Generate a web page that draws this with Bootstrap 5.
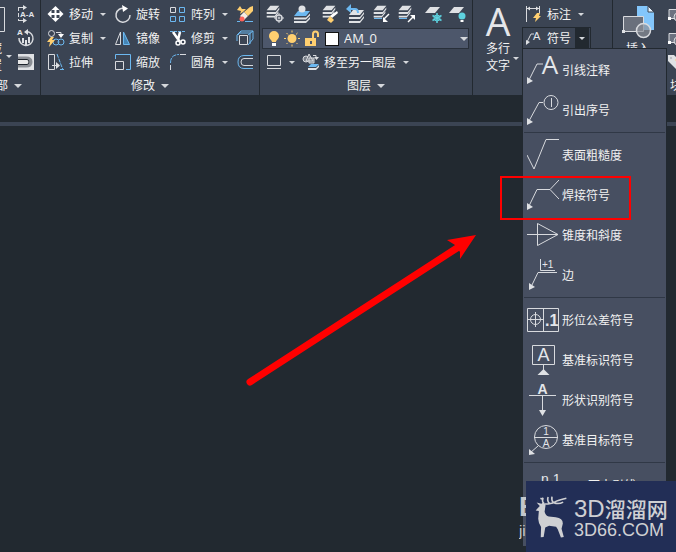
<!DOCTYPE html>
<html lang="zh-CN">
<head>
<meta charset="utf-8">
<meta name="viewport" content="width=device-width, initial-scale=1">
<title>CAD 符号菜单</title>
<link href="https://cdn.jsdelivr.net/npm/bootstrap@5.3.0/dist/css/bootstrap.min.css" rel="stylesheet">
<style>
:root{--panel:#3b4453;--dark:#222930;--menu:#474f61;--ink:#f2f2f2;--sky:#6cb8f0;--gold:#ffcf70}
body{background:var(--dark);color:var(--ink);font:12px/17px "Liberation Sans","Noto Sans CJK SC",sans-serif}
svg{fill:none;stroke:#d8dade;display:block;flex:none}
svg text{fill:#e4e6ea;stroke:none;font-family:"Liberation Sans",sans-serif}
.ribbon{height:95px;background:var(--panel)}
.panel{display:flex;flex-direction:column;flex:none;padding-top:2px;border-right:1px solid var(--dark)}
.panel-body{display:flex;height:72px}
.panel-title{display:flex;justify-content:center;align-items:center;gap:6px;height:24px;padding-top:3px;white-space:nowrap}
.tool{display:inline-flex;align-items:center;gap:4px;height:24px;padding:2px 0 0;border:0;background:none;color:inherit;white-space:nowrap}
.tool>svg,.symbol-menu svg{margin-top:-2px}
.drop{display:inline-flex;align-items:center;justify-content:center;width:20px;height:24px;padding:0;border:0;background:none}
.drop-narrow{width:16px}
.tri{border:solid transparent;border-width:3px 3px 0;border-top-color:#d5d8dc}
.tri-lg{border-width:4px 4px 0}
.tall{display:flex;flex-direction:column;align-items:center;justify-content:flex-end;width:50px;height:73px;padding:0;border:0;background:none;color:inherit}
.tall-label{display:flex;align-items:center;gap:3px;padding-left:9px}
.modify{display:grid;grid-template-columns:67px 55px 68px 20px;grid-auto-rows:24px;padding:0 4px}
.clipped{margin-left:-22px;width:24px}
.clipped-title{margin-left:-16px}
.layer-tools{display:grid;grid-template-columns:28px 28px 25px 26px 25px 28px 24px 20px}
.layer-box{display:flex;align-items:center;height:21px;margin:2px 3px 1px 2px;padding-left:4px;background:#4d576b;border:1px solid #29303a}
.layer-box select{appearance:none;flex:1;min-width:0;height:19px;padding:0;border:0;background:none;color:var(--ink);font:13px/17px "Open Sans",sans-serif}
.swatch{width:14px;height:14px;background:#fff;border:1px solid #111;margin:0 5px 0 4px}
.annotate{padding-right:21px}
.symbol{height:22px;margin:1px 0 0 -1px;border:1px solid var(--dark)}
.symbol .tool,.symbol .drop{height:20px}
.symbol .tool{width:52px}
.symbol .drop{width:14px;background:var(--dark)}
.symbol-menu{--bs-dropdown-min-width:145px;--bs-dropdown-bg:var(--menu);--bs-dropdown-font-size:12px;top:100%;left:-1px;width:145px;padding:1px 0 41px;border:1px solid var(--dark);border-radius:0}
.symbol-menu .dropdown-item{display:flex;align-items:center;gap:3px;height:40px;padding:2px 0 0 4px;color:var(--ink);line-height:17px}
.symbol-menu .dropdown-divider{margin:2px 1px;border-color:#303846;opacity:1}
.insert-title{padding-left:57px}
.tabs{height:27px}
.strip{height:4px;background:var(--panel)}
.solid{fill:#dfe1e4;stroke:none}
.blue{stroke:var(--sky)}
.yellow{fill:var(--gold);stroke:none}
.letter{font-family:"Open Sans",sans-serif}
.frame{left:500px;top:176px;width:131px;height:44px;border:2px solid #f00;z-index:1100;pointer-events:none}
.pointer{left:240px;top:230px;z-index:1}
.brand{right:0;bottom:0;width:150px;height:71px;background:#222e56;color:#cfd0d3;z-index:1200;gap:7px;padding:0 8px 0 9px}
.brand svg{stroke:#cfd0d3}
.brand-top{font-size:24px;line-height:26px;white-space:nowrap}
.brand-top b{font-size:21px;font-weight:500;font-family:"Noto Sans CJK SC",sans-serif}
.brand-sub{font-size:18px;line-height:17px}
.under{right:147px;bottom:11px;width:10px;z-index:1150;color:#c4c7cb;line-height:20px}
.under b{font-size:27px;line-height:28px}
.under span{font-size:15px}
</style>
<script src="https://cdn.jsdelivr.net/npm/bootstrap@5.3.0/dist/js/bootstrap.bundle.min.js"></script>
</head>
<body class="min-vh-100 overflow-hidden position-relative">
<svg width="0" height="0" class="position-absolute" aria-hidden="true">
  <symbol id="stack" viewBox="0 0 20 20"><g fill="#dfe1e4" stroke="none"><path d="M7 2h10l-4 5H3z"/><path d="M3 9h10l4-5v2l-4 5H3zM3 13h9l4-5v2l-4 5H3z"/></g></symbol>
  <symbol id="block" viewBox="0 0 20 20"><path d="M2 5.500h14v9H2zM2 14.500h14" fill="#6b7280" stroke="#d8dade"/><circle cx="11" cy="13" r="4" fill="#777d88" stroke="#d8dade"/><path d="M1 13h3v3H1z" fill="#fff" stroke="none"/></symbol>
</svg>

<header class="ribbon d-flex">
  <section class="panel overflow-hidden">
    <div class="panel-body">
      <button class="tall clipped" type="button"><svg class="overflow-visible mb-2" width="24" height="26"><path d="M4 .5h22.500v24H4"/></svg><span>隐藏<br>设置</span></button>
      <span class="d-flex align-items-end pb-3"><i class="tri ms-1"></i></span>
      <div class="d-flex flex-column ps-1 pe-1">
        <button class="tool" type="button" aria-label="截面"><svg width="20" height="20"><path d="M2.500 3v13" stroke-dasharray="4 2"/><path d="M2 3.500h6M2 16.500h6"/><path class="solid" d="M7 1l4 2.500L7 6zM7 14l4 2.500L7 19z"/><text x="4" y="13" font-size="8" font-weight="bold">A-A</text></svg></button>
        <button class="tool" type="button" aria-label="旋转视图"><svg width="20" height="20"><path d="M3 10a7 7 0 1 0 8-6.500" stroke-width="1.500"/><path class="solid" d="M12 1v6L8 4zM6 10h2v5H6zM9 12h2v5H9zM12 9h2v6h-2z"/><text x="1" y="7" font-size="8" font-weight="bold">A</text></svg></button>
        <button class="tool" type="button" aria-label="轮廓"><svg width="20" height="20"><path class="solid" d="M2 2h16v16H2z"/><path d="M2 6h8q5 0 5 4t-5 4H2" stroke="#8a8e94" stroke-width="3"/><path d="M2 7.500h9q2 0 2 2.500t-2 2.500H2" stroke="#1d232b" fill="#e8e8e8"/></svg></button>
      </div>
    </div>
    <div class="panel-title justify-content-start"><span class="clipped-title">局部</span><i class="tri tri-lg"></i></div>
  </section>

  <section class="panel">
    <div class="panel-body modify">
      <div class="d-flex"><button class="tool" type="button"><svg width="20" height="20"><path d="M10.500 4v12M4 10h13" stroke="#fff" stroke-width="2"/><path fill="#fff" stroke="none" d="M10.500 2l4 4h-8zM10.500 18l4-4h-8zM2.500 10l4-4v8zM18.500 10l-4-4v8z"/></svg>移动</button><button class="drop" type="button" aria-label="移动选项"><i class="tri"></i></button></div>
      <button class="tool" type="button"><svg width="20" height="20"><path d="M13 4.500A7 7 0 1 0 18 11" stroke-width="1.500"/><path d="M10 1l6 3.500L11 8z" fill="#fff" stroke="none"/></svg>旋转</button>
      <div class="d-flex"><button class="tool" type="button"><svg width="20" height="20"><path d="M3.500 3.500h5v5h-5z"/><path class="blue" d="M12.500 3.500h5v5h-5zM3.500 12.500h5v5h-5zM12.500 12.500h5v5h-5z"/></svg>阵列</button><button class="drop" type="button" aria-label="阵列选项"><i class="tri"></i></button></div>
      <button class="tool" type="button" aria-label="删除"><svg width="20" height="20"><path class="yellow" d="M15 3l3-1v5l-5 5-4-4zM5 2l2 3 4 0-3 3-3 2 1-3-4-1z"/><path d="M9 8l4 4-4 4-4-4z" fill="#f4ece4" stroke="none"/><circle cx="7" cy="15" r="2.500" fill="#ff6259" stroke="none"/><path class="blue" d="M2 17.500h3M10 17.500h8"/></svg></button>

      <div class="d-flex"><button class="tool" type="button"><svg width="20" height="20"><circle cx="6.500" cy="5.500" r="3"/><circle class="blue" cx="11" cy="14" r="3"/><circle class="blue" cx="16" cy="14" r="3"/><path d="M11 4.500h5V7"/><path d="M13 6h6l-3 4z" fill="#fff" stroke="none"/><path class="yellow" d="M6 9h3l-2 3h3l-6 7 1-5H2z"/></svg>复制</button><button class="drop" type="button" aria-label="复制选项"><i class="tri"></i></button></div>
      <button class="tool" type="button"><svg width="20" height="20"><path d="M3.500 16.500h5V4z"/><path class="blue" d="M11.500 4v12.500h6z" fill="#4585b5"/></svg>镜像</button>
      <div class="d-flex"><button class="tool" type="button"><svg width="20" height="20"><path class="blue" d="M3 3.500h16" stroke-dasharray="3 1"/><path d="M6 4l7 10M13 4l-2 8" stroke="#fff" stroke-width="2.500"/><circle cx="11" cy="15" r="2" stroke="#fff" stroke-width="1.500"/><circle cx="16" cy="14" r="2" stroke="#fff" stroke-width="1.500"/></svg>修剪</button><button class="drop" type="button" aria-label="修剪选项"><i class="tri"></i></button></div>
      <button class="tool" type="button" aria-label="三维"><svg width="20" height="20"><path class="blue" d="M2 13V7l4-4h12v8l-5 6M6 3l-3 4M13 7l5-4M15 6v10M5 5h11"/><path d="M4.500 7.500h8v9h-8z"/></svg></button>

      <button class="tool" type="button"><svg width="20" height="20"><path d="M3.500 2.500h6v15h-6zM7 13.500h5"/><path class="solid" d="M11 10l4 3.500-4 3.500z"/><path class="blue" d="M12 2l6 16" stroke-dasharray="4 1"/><path class="blue" d="M15 17.500h4"/></svg>拉伸</button>
      <button class="tool" type="button"><svg width="20" height="20"><path d="M3.500 9.500h8v8h-8z"/><path class="blue" d="M3.500 7V2.500h15v15H14"/></svg>缩放</button>
      <div class="d-flex"><button class="tool" type="button"><svg width="20" height="20"><path class="blue" d="M3.500 11Q3.500 2.500 12 2.500" stroke-dasharray="5 1"/><path d="M13 2.500h6M3.500 13v5"/></svg>圆角</button><button class="drop" type="button" aria-label="圆角选项"><i class="tri"></i></button></div>
      <button class="tool" type="button" aria-label="偏移"><svg width="20" height="20"><path class="blue" d="M18 3.500H9q-6 0-6 6.500t6 6.500h9"/><path d="M18 6.500H9q-3 0-3 3.500t3 3.500h9"/></svg></button>
    </div>
    <div class="panel-title">修改<i class="tri tri-lg"></i></div>
  </section>

  <section class="panel">
    <div class="panel-body flex-column">
      <div class="layer-tools ps-1 pe-1">
        <button class="tool" type="button" aria-label="图层特性"><svg width="20" height="20"><use href="#stack" width="18" height="18"/><circle cx="15" cy="14" r="3" fill="#3b4453" stroke-width="1.500"/><path d="M15 9v10M10 14h10" stroke-dasharray="2 6"/><circle cx="15" cy="14" r="1"/></svg></button>
        <button class="tool" type="button" aria-label="置为当前"><svg width="20" height="20"><path d="M6 7h12l-4 5H2z" fill="#6cb8f0" stroke="none"/><path class="solid" d="M2 13.500h12l4-4v2l-4 4H2zM2 17h12l4-4v2l-4 4H2z"/><circle class="solid" cx="10" cy="5" r="3.500"/></svg></button>
        <button class="tool" type="button" aria-label="匹配图层"><svg width="20" height="20"><use href="#stack" width="18" height="18"/><path d="M17 7l1 2-6 5-2-2z" fill="#fff" stroke="none"/><path class="yellow" d="M10 12l4 4-3 3-4-3z"/></svg></button>
        <button class="tool" type="button" aria-label="上一个"><svg width="20" height="20"><path class="solid" d="M8 6h11l-4 5H4zM4 13h11l4-5v2l-4 5H4zM4 17h11l4-5v2l-4 5H4z"/><path class="blue" d="M4 5h6q3 0 3 4" stroke-width="2"/><path d="M6 0v9L1 5z" fill="#6cb8f0" stroke="none"/></svg></button>
        <button class="tool" type="button" aria-label="隔离"><svg width="20" height="20"><use href="#stack" width="18" height="18"/><path class="blue" d="M3 14.500h8"/><path d="M18 10l-5 5" stroke="#fff" stroke-width="1.500"/><path d="M12 13v5h5z" fill="#fff" stroke="none"/></svg></button>
        <button class="tool" type="button" aria-label="取消隔离"><svg width="20" height="20"><use href="#stack" width="18" height="18"/><path class="blue" d="M3 14.500h8"/><path d="M12 18l5-5" stroke="#fff" stroke-width="1.500"/><path d="M14 11h5v5z" fill="#fff" stroke="none"/></svg></button>
        <button class="tool" type="button" aria-label="冻结"><svg width="20" height="20"><path class="solid" d="M6 3h10l-5 6H1z"/><path d="M13 9v10M8.500 11.500l9 5M8.500 16.500l9-5" stroke="#5ed2df" stroke-width="1.500"/><circle cx="13" cy="14" r="3" stroke="#5ed2df"/></svg></button>
        <button class="tool" type="button" aria-label="关闭"><svg width="20" height="20"><path class="solid" d="M6 3h10l-5 6H1z"/><circle cx="14" cy="12" r="3.500" fill="#5ed2df" stroke="none"/><path d="M12.500 16h3v2h-3z" fill="#fff" stroke="none"/></svg></button>
      </div>
      <div class="layer-box">
        <svg width="54" height="20"><path class="yellow" d="M7 2a5 5 0 0 0-5 5c0 3 3 4 3 6h4c0-2 3-3 3-6a5 5 0 0 0-5-5z"/><path d="M5 14h4v3H5z" fill="#fff" stroke="none"/><circle class="yellow" cx="25" cy="9.500" r="4.500"/><path d="M25 1.500v16M17 9.500h16M19.500 4l11 11M30.500 4l-11 11" stroke="#ffcf70" stroke-dasharray="2 12"/><path class="yellow" d="M38 9h11v8H38z"/><path d="M46 9V5q0-2.500 2.500-2.500T51 5v3" stroke="#ffcf70" stroke-width="2"/><path d="M43 12h2v3h-2z" fill="#4d576b" stroke="none"/></svg>
        <span class="swatch"></span>
        <select aria-label="当前图层"><option>AM_0</option></select><i class="tri tri-lg"></i>
      </div>
      <div class="d-flex ps-1"><button class="tool" type="button" aria-label="图层状态"><svg width="20" height="20"><path d="M3.500 3.500h13v10h-13zM3 16.500h14"/></svg></button><button class="drop drop-narrow" type="button" aria-label="状态选项"><i class="tri"></i></button><button class="tool" type="button"><svg width="20" height="20"><circle cx="6" cy="7" r="3" fill="#7b818b"/><path d="M9 2l4 7H6zM9 6h5v5H9z" fill="#7b818b"/><path d="M13 3.500h3V6"/><path class="solid" d="M14 5h5l-2.500 3z"/><path d="M11 12h8l-3 3H8z" fill="#6cb8f0" stroke="none"/><path class="solid" d="M8 16h8l3-3v2l-3 3H8z"/></svg>移至另一图层</button><button class="drop" type="button" aria-label="移动图层选项"><i class="tri"></i></button></div>
    </div>
    <div class="panel-title">图层<i class="tri tri-lg"></i></div>
  </section>

  <section class="panel">
    <div class="panel-body">
      <button class="tall" type="button"><svg width="30" height="38"><text class="letter" x="15" y="33" font-size="39" text-anchor="middle">A</text></svg><span class="tall-label"><span>多行<br>文字</span><i class="tri"></i></span></button>
      <div class="d-flex flex-column annotate">
        <div class="d-flex"><button class="tool" type="button"><svg width="20" height="20"><path d="M3.500 2v16M16.500 2v7M4 4.500h13"/><path class="solid" d="M4 4.500l3-2v4zM16 4.500l-3-2v4z"/><path class="yellow" d="M14 9h3l-1 3h2l-6 6 1-4h-3z"/></svg>标注</button><button class="drop" type="button" aria-label="标注选项"><i class="tri"></i></button></div>
        <div class="dropdown symbol d-flex">
          <button class="tool" type="button"><svg width="20" height="20"><path d="M4 14l4-8h3"/><path class="solid" d="M3 12v5l4-3z"/><text x="10" y="12" font-size="11">A</text></svg>符号</button>
          <button class="drop" type="button" aria-label="符号选项" aria-expanded="true" data-bs-toggle="dropdown"><i class="tri"></i></button>
          <div class="dropdown-menu symbol-menu show">
            <a class="dropdown-item" href="#"><svg width="32" height="36"><path d="M2 28l8-16h6"/><path class="solid" d="M0 25v7l6-3z"/><text class="letter" x="23" y="22" font-size="26" text-anchor="middle">A</text></svg>引线注释</a>
            <a class="dropdown-item" href="#"><svg width="32" height="36"><path d="M2 29l10-18.500h4M24.500 6v9"/><circle cx="24" cy="10.500" r="7"/><path class="solid" d="M0 26v7l6-3z"/></svg>引出序号</a>
            <hr class="dropdown-divider">
            <a class="dropdown-item" href="#"><svg width="32" height="36"><path d="M0 18l7 14L19 2.500h13"/></svg>表面粗糙度</a>
            <a class="dropdown-item" href="#"><svg width="32" height="36"><path d="M2 29l8-16.500h13M32 3l-9 9.500 9 9.500"/><path class="solid" d="M0 26v7l6-3z"/></svg>焊接符号</a>
            <a class="dropdown-item" href="#"><svg width="32" height="36"><path d="M0 17.500h31L10.500 6.500v22l20.500-11"/></svg>锥度和斜度</a>
            <a class="dropdown-item" href="#"><svg width="32" height="36"><path d="M13.500 2v11.500H28M30 15.500H11L4 30"/><path class="solid" d="M2 26v7l6-3z"/><text x="15" y="11" font-size="10">+1</text></svg>边</a>
            <hr class="dropdown-divider">
            <a class="dropdown-item" href="#"><svg width="32" height="36"><path d="M.5 6.500h31v23H.5zM16.500 6.500v23M8.500 10v15M1 17.500h15"/><circle cx="8.500" cy="17.500" r="5"/><text x="18" y="24" font-size="16" font-weight="bold">.1</text></svg>形位公差符号</a>
            <a class="dropdown-item" href="#"><svg width="32" height="36"><path d="M5.500 3.500h22v19h-22zM16.500 23v6"/><path class="solid" d="M16.500 27l6 6h-12z"/><text x="16.500" y="19" font-size="18" text-anchor="middle">A</text></svg>基准标识符号</a>
            <a class="dropdown-item" href="#"><svg width="32" height="36"><path d="M2 13.500h27M15.500 13.500V28"/><path class="solid" d="M12 28h7l-3.500 6z"/><text x="15.500" y="12" font-size="14" font-weight="bold" text-anchor="middle">A</text></svg>形状识别符号</a>
            <a class="dropdown-item" href="#"><svg width="32" height="36"><circle cx="19" cy="15" r="11.500"/><path d="M7 15.500h24M11 24l-8 7"/><path class="solid" d="M2 27v6l6-1z"/><text x="19" y="13" font-size="10" text-anchor="middle">1</text><text x="19" y="25" font-size="10" text-anchor="middle">A</text></svg>基准目标符号</a>
            <hr class="dropdown-divider">
            <a class="dropdown-item" href="#"><svg width="32" height="36"><text x="14" y="17" font-size="14">n.1</text></svg><span class="ps-1">Ctrl 两支引线</span></a>
          </div>
        </div>
      </div>
    </div>
  </section>

  <section class="panel flex-fill flex-shrink-1 overflow-hidden border-0">
    <div class="panel-body">
      <button class="tall flex-shrink-0" type="button"><svg width="34" height="35"><path d="M16 0h11l6 6v18H16z" fill="#83c6fb" stroke="none"/><path d="M27 0v6h6z" fill="#e8f5ff" stroke="#3b4453"/><path d="M2.500 10.500h20v15h-20z" fill="#6a707c"/><circle cx="22.500" cy="24.500" r="7" fill="#8b9099" fill-opacity=".7" stroke-width="1.500"/><path class="solid" d="M1 24h3v3H1z"/></svg><span>插入<br>&nbsp;</span></button>
      <div class="d-flex flex-column ps-1">
        <button class="tool" type="button" aria-label="创建块"><svg width="20" height="20"><use href="#block" width="20" height="20"/><path class="yellow" d="M9 1l2 3 4 1-5 2z"/></svg></button>
        <button class="tool" type="button" aria-label="编辑块"><svg width="20" height="20"><use href="#block" width="20" height="20"/><path class="yellow" d="M9 8l6-6 2 2-6 6z"/></svg></button>
        <button class="tool" type="button" aria-label="编辑属性"><svg width="20" height="20"><path class="solid" d="M1 3h6l9 9-6 6-9-9z"/><circle cx="4" cy="6" r="1" fill="#3b4453"/><path class="yellow" d="M8 8l6-6 2 2-6 6z"/></svg></button>
      </div>
    </div>
    <div class="panel-title justify-content-start insert-title">块<i class="tri tri-lg"></i></div>
  </section>
</header>
<div class="tabs"></div>
<div class="strip"></div>
<main aria-label="绘图区"></main>

<svg class="pointer position-absolute" width="240" height="160" aria-hidden="true"><path d="M10 152L217 18" stroke="#f00" stroke-width="7" stroke-linecap="round"/><path d="M236 5l-29 5 8 5 5 7 0 7z" fill="#f00" stroke="none"/></svg>
<div class="frame position-absolute"></div>
<div class="under position-absolute d-flex flex-column overflow-hidden"><b>B</b><span>ji</span></div>
<aside class="brand position-absolute d-flex align-items-center">
  <svg width="32" height="45" viewBox="105 118 100 134"><path fill="#cfd0d3" stroke="none" d="M107 166l13-14-10-11 15 4 8-5 5 10-3 20q3 13 13 15l22 2q22 2 22 20l-4 16 7 26-9 2-10-26-5-8-22-3-12 5-5 30-9 1 1-32q-8-10-9-26l2-24z"/><path d="M132 146q-6-10-2-20M136 146q20 0 30-6t37-12M150 144q-8-8-4-20M162 141q-6-6-4-18M164 142q15 6 29-2M130 132l-8-4" stroke-width="5"/></svg>
  <div><div class="brand-top">3D<b>溜溜网</b></div><div class="brand-sub">3D66.COM</div></div>
</aside>
</body>
</html>
